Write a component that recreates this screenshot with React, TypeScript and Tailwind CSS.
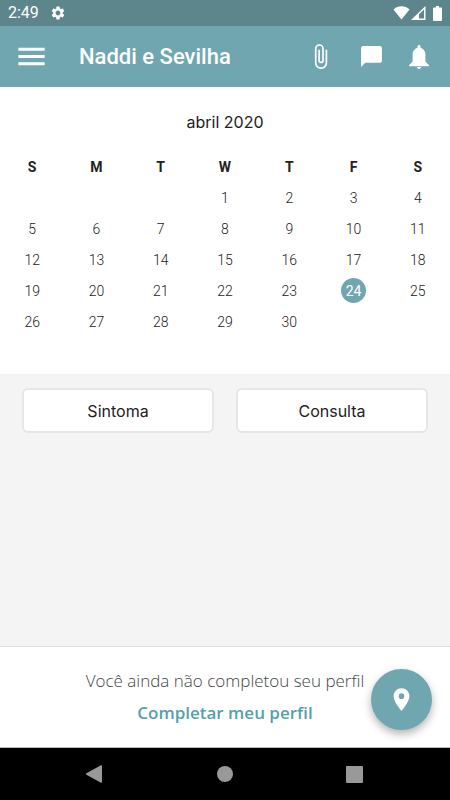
import { MdAttachFile, MdChatBubble, MdMenu, MdPlace, MdSettings } from "react-icons/md";

const weekDays = ["S", "M", "T", "W", "T", "F", "S"];

const weeks = [
  [null, null, null, 1, 2, 3, 4],
  [5, 6, 7, 8, 9, 10, 11],
  [12, 13, 14, 15, 16, 17, 18],
  [19, 20, 21, 22, 23, 24, 25],
  [26, 27, 28, 29, 30, null, null],
];

const today = 24;

const StatusBar = () => {
  return (
    <div className="flex h-[26px] items-center bg-[#5c868c] px-2 text-white">
      <span className="text-base leading-none">2:49</span>
      <MdSettings size={16} className="ml-[11px]" />
      <div className="ml-auto flex items-center gap-px">
        <svg width="17" height="14" viewBox="0 0 17 14" fill="currentColor">
          <path d="M0.5 3.4C5-0.9 12-0.9 16.5 3.4L8.500 13.500Z" />
        </svg>
        <svg width="15" height="14" viewBox="0 0 15 14" fill="currentColor">
          <path fillRule="evenodd" d="M0 14L14.500 0V14ZM8 8.200V12.600H13V3.500Z" />
        </svg>
        <svg width="9" height="15" viewBox="0 0 9 15" fill="currentColor" className="ml-1.5">
          <path d="M3 0H6V1.500H8Q9 1.500 9 2.500V14Q9 15 8 15H1Q0 15 0 14V2.500Q0 1.500 1 1.500H3Z" />
        </svg>
      </div>
    </div>
  );
};

const Header = () => {
  return (
    <header className="flex h-[61px] items-center bg-[#70a6b0] pr-[21px] pl-3.5 text-white">
      <button type="button" aria-label="Menu">
        <MdMenu size={35} />
      </button>
      <h1 className="ml-[30px] text-[22px] leading-7 font-medium">Naddi e Sevilha</h1>
      <div className="ml-auto flex items-center gap-[25px]">
        <button type="button" aria-label="Anexos">
          <MdAttachFile size={27} />
        </button>
        <button type="button" aria-label="Mensagens">
          <MdChatBubble size={25} />
        </button>
        <button type="button" aria-label="Notificações">
          <svg width="20" height="24" viewBox="0 0 20 24" fill="currentColor">
            <path d="M10 0C10.900 0 11.600 0.700 11.600 1.600V2.700C14.500 3.500 16.400 6.200 16.400 9.300V16.500L20 20.200V21.300H0V20.200L3.600 16.500V9.300C3.600 6.200 5.500 3.500 8.400 2.700V1.600C8.400 0.700 9.100 0 10 0Z" />
            <path d="M7.900 22.100H12.100C12 23.200 11.100 24 10 24S8 23.200 7.900 22.100Z" />
          </svg>
        </button>
      </div>
    </header>
  );
};

const Calendar = () => {
  return (
    <section className="bg-white pt-6 pb-[37px]">
      <h2 className="mb-[18px] text-center font-['Inter',sans-serif] text-base leading-[22px] text-[#222]">
        abril 2020
      </h2>
      <table className="w-full table-fixed text-center text-sm text-[#222]">
        <thead>
          <tr className="h-[31px]">
            {weekDays.map((day, i) => (
              <th key={i} className="p-0 font-bold">{day}</th>
            ))}
          </tr>
        </thead>
        <tbody className="font-light">
          {weeks.map((week, i) => (
            <tr key={i} className="h-[31px]">
              {week.map((day, j) => (
                <td key={j} className="p-0">
                  {day === today ? (
                    <span className="mx-auto flex size-[25px] items-center justify-center rounded-full bg-[#70a6b0] font-normal text-white">
                      {day}
                    </span>
                  ) : (
                    day
                  )}
                </td>
              ))}
            </tr>
          ))}
        </tbody>
      </table>
    </section>
  );
};

const AndroidNav = () => {
  return (
    <nav className="flex h-[52px] items-center justify-between bg-black pr-[87px] pl-[85px] text-[#999]">
      <button type="button" aria-label="Voltar">
        <svg width="18" height="18" viewBox="0 0 18 18" fill="currentColor">
          <path d="M1.400 8.300L16 0.200Q17 0 17 1V17Q17 18 16 17.800L1.400 9.700Q0.200 9 1.400 8.300Z" />
        </svg>
      </button>
      <button type="button" aria-label="Início" className="size-4 rounded-full bg-[#999]" />
      <button type="button" aria-label="Recentes" className="size-[17px] rounded-[1px] bg-[#999]" />
    </nav>
  );
};

const App = () => {
  return (
    <div className="flex min-h-screen flex-col bg-[#f4f4f4] font-['Roboto',sans-serif]">
      <StatusBar />
      <Header />
      <Calendar />
      <main className="grid flex-1 grid-cols-2 content-start gap-[22px] px-[22px] pt-3.5">
        {["Sintoma", "Consulta"].map((label) => (
          <button
            key={label}
            type="button"
            className="h-[45px] rounded-md border-2 border-[#e6e6e6] bg-white font-['Inter',sans-serif] text-base text-[#222]"
          >
            {label}
          </button>
        ))}
      </main>
      <footer className="relative flex h-[102px] flex-col items-center border-t border-b border-t-[#dedede] border-b-[#bbb] bg-white pt-[18px] font-['Open_Sans',sans-serif] text-[17px]">
        <p className="leading-8 font-light text-[#444]">Você ainda não completou seu perfil</p>
        <a href="#perfil" className="leading-8 font-semibold text-[#559fab]">
          Completar meu perfil
        </a>
        <button
          type="button"
          aria-label="Localização"
          className="absolute top-[22px] right-[18px] flex size-[61px] items-center justify-center rounded-full bg-[#70a6b0] text-white shadow-[0_4px_8px_rgba(0,0,0,0.3)]"
        >
          <MdPlace size={27} />
        </button>
      </footer>
      <AndroidNav />
    </div>
  );
};

export default App;
